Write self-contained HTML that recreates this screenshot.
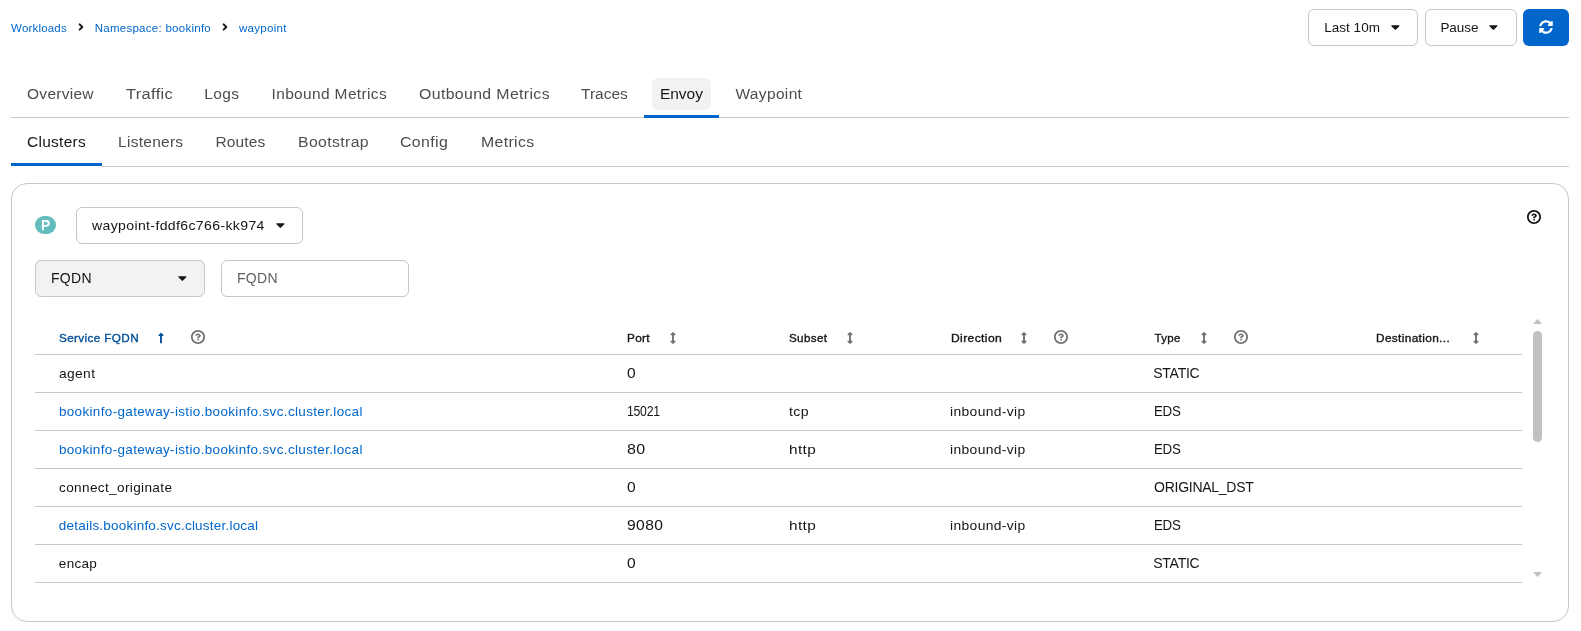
<!DOCTYPE html>
<html lang="en"><head><meta charset="utf-8"><title>Kiali - waypoint Envoy Clusters</title>
<style>
html,body{margin:0;padding:0;background:#fff}
body{width:1581px;height:631px;position:relative;overflow:hidden;font-family:"Liberation Sans", sans-serif}
.t{position:absolute;white-space:pre;line-height:1;transform-origin:0 0}
#txt{position:absolute;left:0;top:0;width:1581px;height:631px;will-change:transform}
.b{position:absolute;box-sizing:border-box}
svg{position:absolute;overflow:visible}
</style></head><body>
<!-- tab lines -->
<div class="b" style="left:11px;top:117px;width:1558px;height:1px;background:#c7c7c7"></div>
<div class="b" style="left:102px;top:166px;width:1467px;height:1px;background:#c7c7c7"></div>
<div class="b" style="left:652px;top:78px;width:59px;height:32px;background:#f2f2f2;border-radius:6px"></div>
<div class="b" style="left:644px;top:115px;width:75px;height:3px;background:#0066cc"></div>
<div class="b" style="left:11px;top:163px;width:91px;height:3px;background:#0066cc"></div>
<!-- top-right buttons -->
<div class="b" style="left:1308px;top:9px;width:110px;height:37px;border:1px solid #c7c7c7;border-radius:6px"></div>
<div class="b" style="left:1425px;top:9px;width:92px;height:37px;border:1px solid #c7c7c7;border-radius:6px"></div>
<div class="b" style="left:1523px;top:9px;width:46px;height:37px;background:#0066cc;border-radius:6px"></div>
<!-- card -->
<div class="b" style="left:11px;top:183px;width:1558px;height:439px;border:1px solid #c7c7c7;border-radius:16px"></div>
<div class="b" style="left:35px;top:216px;width:21px;height:18px;background:#63bdbd;border-radius:9px"></div>
<div class="b" style="left:76px;top:207px;width:227px;height:37px;border:1px solid #c7c7c7;border-radius:6px"></div>
<div class="b" style="left:35px;top:260px;width:170px;height:37px;border:1px solid #c7c7c7;border-radius:6px;background:#f2f2f2"></div>
<div class="b" style="left:221px;top:260px;width:188px;height:37px;border:1px solid #c7c7c7;border-radius:6px"></div>
<!-- table lines -->
<div class="b" style="left:35px;top:354px;width:1487px;height:1px;background:#c7c7c7"></div>
<div class="b" style="left:35px;top:392px;width:1487px;height:1px;background:#c7c7c7"></div>
<div class="b" style="left:35px;top:430px;width:1487px;height:1px;background:#c7c7c7"></div>
<div class="b" style="left:35px;top:468px;width:1487px;height:1px;background:#c7c7c7"></div>
<div class="b" style="left:35px;top:506px;width:1487px;height:1px;background:#c7c7c7"></div>
<div class="b" style="left:35px;top:544px;width:1487px;height:1px;background:#c7c7c7"></div>
<div class="b" style="left:35px;top:582px;width:1487px;height:1px;background:#c7c7c7"></div>
<!-- icons -->
<!-- breadcrumb chevrons 6x12 -->
<svg style="left:77.7px;top:20.9px" width="6" height="12" viewBox="0 0 256 512" fill="#151515"><path d="M224.3 273l-136 136c-9.4 9.4-24.6 9.4-33.9 0l-22.6-22.6c-9.4-9.4-9.4-24.6 0-33.9l96.4-96.4-96.4-96.4c-9.4-9.4-9.4-24.6 0-33.9L54.3 103c9.4-9.4 24.6-9.4 33.9 0l136 136c9.5 9.4 9.5 24.6.1 34z"/></svg>
<svg style="left:221.7px;top:20.9px" width="6" height="12" viewBox="0 0 256 512" fill="#151515"><path d="M224.3 273l-136 136c-9.4 9.4-24.6 9.4-33.9 0l-22.6-22.6c-9.4-9.4-9.4-24.6 0-33.9l96.4-96.4-96.4-96.4c-9.4-9.4-9.4-24.6 0-33.9L54.3 103c9.4-9.4 24.6-9.4 33.9 0l136 136c9.5 9.4 9.5 24.6.1 34z"/></svg>
<!-- carets 8.75x14 -->
<svg style="left:1391.1px;top:20px" width="8.75" height="14" viewBox="0 0 320 512" fill="#151515"><path d="M31.3 192h257.3c17.8 0 26.7 21.5 14.1 34.1L174.1 354.8c-7.8 7.8-20.5 7.8-28.3 0L17.2 226.1C4.6 213.5 13.5 192 31.3 192z"/></svg>
<svg style="left:1489.2px;top:20px" width="8.75" height="14" viewBox="0 0 320 512" fill="#151515"><path d="M31.3 192h257.3c17.8 0 26.7 21.5 14.1 34.1L174.1 354.8c-7.8 7.8-20.5 7.8-28.3 0L17.2 226.1C4.6 213.5 13.5 192 31.3 192z"/></svg>
<svg style="left:276.1px;top:218px" width="8.75" height="14" viewBox="0 0 320 512" fill="#151515"><path d="M31.3 192h257.3c17.8 0 26.7 21.5 14.1 34.1L174.1 354.8c-7.8 7.8-20.5 7.8-28.3 0L17.2 226.1C4.6 213.5 13.5 192 31.3 192z"/></svg>
<svg style="left:177.6px;top:270.8px" width="8.75" height="14" viewBox="0 0 320 512" fill="#151515"><path d="M31.3 192h257.3c17.8 0 26.7 21.5 14.1 34.1L174.1 354.8c-7.8 7.8-20.5 7.8-28.3 0L17.2 226.1C4.6 213.5 13.5 192 31.3 192z"/></svg>
<!-- sync -->
<svg style="left:1539px;top:20px" width="14" height="14" viewBox="0 0 512 512" fill="#ffffff"><path d="M370.72 133.28C339.458 104.008 298.888 87.962 255.848 88c-77.458.068-144.328 53.178-162.791 126.85-1.344 5.363-6.122 9.15-11.651 9.15H24.103c-7.498 0-13.194-6.807-11.807-14.176C33.933 94.924 134.813 8 256 8c66.448 0 126.791 26.136 171.315 68.685L463.03 40.97C478.149 25.851 504 36.559 504 57.941V192c0 13.255-10.745 24-24 24H345.941c-21.382 0-32.09-25.851-16.971-40.971l41.75-41.749zM32 296h134.059c21.382 0 32.09 25.851 16.971 40.971l-41.75 41.75c31.262 29.273 71.835 45.319 114.876 45.28 77.418-.07 144.315-53.144 162.787-126.849 1.344-5.363 6.122-9.15 11.651-9.15h57.304c7.498 0 13.194 6.807 11.807 14.176C478.067 417.076 377.187 504 256 504c-66.448 0-126.791-26.136-171.315-68.685L48.97 471.03C33.851 486.149 8 475.441 8 454.059V320c0-13.255 10.745-24 24-24z"/></svg>
<!-- sort icons 6x12 -->
<svg style="left:158px;top:332px" width="6" height="12" viewBox="0 0 256 512" fill="#004d99"><path d="M88 166.059V468c0 6.627 5.373 12 12 12h56c6.627 0 12-5.373 12-12V166.059h46.059c21.382 0 32.09-25.851 16.971-40.971l-86.059-86.059c-9.373-9.373-24.569-9.373-33.941 0l-86.059 86.059c-15.119 15.119-4.411 40.971 16.971 40.971H88z"/></svg>
<svg style="left:670px;top:332px" width="6" height="12" viewBox="0 0 256 512" fill="#707070"><path d="M214.059 377.941H168V134.059h46.059c21.382 0 32.09-25.851 16.971-40.971L144.971 7.029c-9.373-9.373-24.568-9.373-33.941 0L24.971 93.088c-15.119 15.119-4.411 40.971 16.971 40.971H88v243.882H41.941c-21.382 0-32.09 25.851-16.971 40.971l86.059 86.059c9.373 9.373 24.568 9.373 33.941 0l86.059-86.059c15.12-15.119 4.412-40.971-16.97-40.971z"/></svg>
<svg style="left:846.8px;top:332px" width="6" height="12" viewBox="0 0 256 512" fill="#707070"><path d="M214.059 377.941H168V134.059h46.059c21.382 0 32.09-25.851 16.971-40.971L144.971 7.029c-9.373-9.373-24.568-9.373-33.941 0L24.971 93.088c-15.119 15.119-4.411 40.971 16.971 40.971H88v243.882H41.941c-21.382 0-32.09 25.851-16.971 40.971l86.059 86.059c9.373 9.373 24.568 9.373 33.941 0l86.059-86.059c15.12-15.119 4.412-40.971-16.97-40.971z"/></svg>
<svg style="left:1020.8px;top:332px" width="6" height="12" viewBox="0 0 256 512" fill="#707070"><path d="M214.059 377.941H168V134.059h46.059c21.382 0 32.09-25.851 16.971-40.971L144.971 7.029c-9.373-9.373-24.568-9.373-33.941 0L24.971 93.088c-15.119 15.119-4.411 40.971 16.971 40.971H88v243.882H41.941c-21.382 0-32.09 25.851-16.971 40.971l86.059 86.059c9.373 9.373 24.568 9.373 33.941 0l86.059-86.059c15.12-15.119 4.412-40.971-16.97-40.971z"/></svg>
<svg style="left:1200.7px;top:332px" width="6" height="12" viewBox="0 0 256 512" fill="#707070"><path d="M214.059 377.941H168V134.059h46.059c21.382 0 32.09-25.851 16.971-40.971L144.971 7.029c-9.373-9.373-24.568-9.373-33.941 0L24.971 93.088c-15.119 15.119-4.411 40.971 16.971 40.971H88v243.882H41.941c-21.382 0-32.09 25.851-16.971 40.971l86.059 86.059c9.373 9.373 24.568 9.373 33.941 0l86.059-86.059c15.12-15.119 4.412-40.971-16.97-40.971z"/></svg>
<svg style="left:1473.1px;top:332px" width="6" height="12" viewBox="0 0 256 512" fill="#707070"><path d="M214.059 377.941H168V134.059h46.059c21.382 0 32.09-25.851 16.971-40.971L144.971 7.029c-9.373-9.373-24.568-9.373-33.941 0L24.971 93.088c-15.119 15.119-4.411 40.971 16.971 40.971H88v243.882H41.941c-21.382 0-32.09 25.851-16.971 40.971l86.059 86.059c9.373 9.373 24.568 9.373 33.941 0l86.059-86.059c15.12-15.119 4.412-40.971-16.97-40.971z"/></svg>
<!-- help icons 14x14 -->
<svg style="left:191px;top:330px" width="14" height="14" viewBox="0 0 1024 1024" fill="#707070"><path fill-rule="evenodd" d="M521.3,576 C627.5,576 713.7,502 713.7,413.7 C713.7,325.4 627.6,253.6 521.3,253.6 C366,253.6 334.5,337.7 329.2,407.2 C329.2,414.3 335.2,416 343.5,416 L445,416 C450.5,416 458,415.5 460.8,406.5 C460.8,362.6 582.9,357.1 582.9,413.6 C582.9,441.9 556.2,470.9 521.3,473 C486.4,475.1 447.3,479.8 447.3,521.7 L447.3,553.8 C447.3,570.8 456.1,576 472,576 C487.9,576 521.3,576 521.3,576 M575.3,751.3 L575.3,655.3 C575.3,649.3 570.7,644.7 564.7,644.7 L468.7,644.7 C462.7,644.7 458.1,649.3 458.1,655.3 L458.1,751.3 C458.1,757.3 462.7,761.9 468.7,761.9 L564.7,761.9 C570.7,761.9 575.3,757.3 575.3,751.3 M512,896 C300.2,896 128,723.9 128,512 C128,300.3 300.2,128 512,128 C723.8,128 896,300.2 896,512 C896,723.8 723.7,896 512,896 M512.1,0 C229.7,0 0,229.8 0,512 C0,794.2 229.8,1024 512.1,1024 C794.4,1024 1024,794.3 1024,512 C1024,229.7 794.4,0 512.1,0"/></svg>
<svg style="left:1054px;top:330px" width="14" height="14" viewBox="0 0 1024 1024" fill="#707070"><path fill-rule="evenodd" d="M521.3,576 C627.5,576 713.7,502 713.7,413.7 C713.7,325.4 627.6,253.6 521.3,253.6 C366,253.6 334.5,337.7 329.2,407.2 C329.2,414.3 335.2,416 343.5,416 L445,416 C450.5,416 458,415.5 460.8,406.5 C460.8,362.6 582.9,357.1 582.9,413.6 C582.9,441.9 556.2,470.9 521.3,473 C486.4,475.1 447.3,479.8 447.3,521.7 L447.3,553.8 C447.3,570.8 456.1,576 472,576 C487.9,576 521.3,576 521.3,576 M575.3,751.3 L575.3,655.3 C575.3,649.3 570.7,644.7 564.7,644.7 L468.7,644.7 C462.7,644.7 458.1,649.3 458.1,655.3 L458.1,751.3 C458.1,757.3 462.7,761.9 468.7,761.9 L564.7,761.9 C570.7,761.9 575.3,757.3 575.3,751.3 M512,896 C300.2,896 128,723.9 128,512 C128,300.3 300.2,128 512,128 C723.8,128 896,300.2 896,512 C896,723.8 723.7,896 512,896 M512.1,0 C229.7,0 0,229.8 0,512 C0,794.2 229.8,1024 512.1,1024 C794.4,1024 1024,794.3 1024,512 C1024,229.7 794.4,0 512.1,0"/></svg>
<svg style="left:1234px;top:330px" width="14" height="14" viewBox="0 0 1024 1024" fill="#707070"><path fill-rule="evenodd" d="M521.3,576 C627.5,576 713.7,502 713.7,413.7 C713.7,325.4 627.6,253.6 521.3,253.6 C366,253.6 334.5,337.7 329.2,407.2 C329.2,414.3 335.2,416 343.5,416 L445,416 C450.5,416 458,415.5 460.8,406.5 C460.8,362.6 582.9,357.1 582.9,413.6 C582.9,441.9 556.2,470.9 521.3,473 C486.4,475.1 447.3,479.8 447.3,521.7 L447.3,553.8 C447.3,570.8 456.1,576 472,576 C487.9,576 521.3,576 521.3,576 M575.3,751.3 L575.3,655.3 C575.3,649.3 570.7,644.7 564.7,644.7 L468.7,644.7 C462.7,644.7 458.1,649.3 458.1,655.3 L458.1,751.3 C458.1,757.3 462.7,761.9 468.7,761.9 L564.7,761.9 C570.7,761.9 575.3,757.3 575.3,751.3 M512,896 C300.2,896 128,723.9 128,512 C128,300.3 300.2,128 512,128 C723.8,128 896,300.2 896,512 C896,723.8 723.7,896 512,896 M512.1,0 C229.7,0 0,229.8 0,512 C0,794.2 229.8,1024 512.1,1024 C794.4,1024 1024,794.3 1024,512 C1024,229.7 794.4,0 512.1,0"/></svg>
<svg style="left:1527px;top:210px" width="14" height="14" viewBox="0 0 1024 1024" fill="#151515"><path fill-rule="evenodd" d="M521.3,576 C627.5,576 713.7,502 713.7,413.7 C713.7,325.4 627.6,253.6 521.3,253.6 C366,253.6 334.5,337.7 329.2,407.2 C329.2,414.3 335.2,416 343.5,416 L445,416 C450.5,416 458,415.5 460.8,406.5 C460.8,362.6 582.9,357.1 582.9,413.6 C582.9,441.9 556.2,470.9 521.3,473 C486.4,475.1 447.3,479.8 447.3,521.7 L447.3,553.8 C447.3,570.8 456.1,576 472,576 C487.9,576 521.3,576 521.3,576 M575.3,751.3 L575.3,655.3 C575.3,649.3 570.7,644.7 564.7,644.7 L468.7,644.7 C462.7,644.7 458.1,649.3 458.1,655.3 L458.1,751.3 C458.1,757.3 462.7,761.9 468.7,761.9 L564.7,761.9 C570.7,761.9 575.3,757.3 575.3,751.3 M512,896 C300.2,896 128,723.9 128,512 C128,300.3 300.2,128 512,128 C723.8,128 896,300.2 896,512 C896,723.8 723.7,896 512,896 M512.1,0 C229.7,0 0,229.8 0,512 C0,794.2 229.8,1024 512.1,1024 C794.4,1024 1024,794.3 1024,512 C1024,229.7 794.4,0 512.1,0"/></svg>
<!-- scrollbar -->
<div class="b" style="left:1533px;top:331px;width:9px;height:110.5px;background:#c1c1c1;border-radius:4.5px"></div>
<svg style="left:1533px;top:319px" width="9" height="5" viewBox="0 0 9 5" fill="#c1c1c1"><path d="M0 5L4.5 0L9 5z"/></svg>
<svg style="left:1533px;top:572px" width="9" height="5" viewBox="0 0 9 5" fill="#c1c1c1"><path d="M0 0L4.5 5L9 0z"/></svg>

<div id="txt">
<span class="t" style="left:11.12px;top:23px;font-size:11.5px;color:#0066cc;letter-spacing:0.178px">Workloads</span>
<span class="t" style="left:94.70px;top:23px;font-size:11.5px;color:#0066cc;letter-spacing:0.268px">Namespace: bookinfo</span>
<span class="t" style="left:238.93px;top:23px;font-size:11.5px;color:#0066cc;letter-spacing:0.294px">waypoint</span>
<span class="t" style="left:27.05px;top:86px;font-size:15.5px;color:#4d4d4d;letter-spacing:0.263px">Overview</span>
<span class="t" style="left:126.08px;top:86px;font-size:15.5px;color:#4d4d4d;letter-spacing:0.350px;transform:scaleX(1.0546)">Traffic</span>
<span class="t" style="left:204.22px;top:86px;font-size:15.5px;color:#4d4d4d;letter-spacing:0.350px">Logs</span>
<span class="t" style="left:271.53px;top:86px;font-size:15.5px;color:#4d4d4d;letter-spacing:0.346px">Inbound Metrics</span>
<span class="t" style="left:418.64px;top:86px;font-size:15.5px;color:#4d4d4d;letter-spacing:0.350px;transform:scaleX(1.0234)">Outbound Metrics</span>
<span class="t" style="left:581.08px;top:86px;font-size:15.5px;color:#4d4d4d;letter-spacing:-0.011px">Traces</span>
<span class="t" style="left:735.45px;top:86px;font-size:15.5px;color:#4d4d4d;letter-spacing:0.350px">Waypoint</span>
<span class="t" style="left:659.92px;top:86px;font-size:15.5px;color:#151515;letter-spacing:-0.026px">Envoy</span>
<span class="t" style="left:27.10px;top:134px;font-size:15.5px;color:#151515;letter-spacing:0.247px">Clusters</span>
<span class="t" style="left:118.12px;top:134px;font-size:15.5px;color:#4d4d4d;letter-spacing:0.260px">Listeners</span>
<span class="t" style="left:215.52px;top:134px;font-size:15.5px;color:#4d4d4d;letter-spacing:0.135px">Routes</span>
<span class="t" style="left:298.30px;top:134px;font-size:15.5px;color:#4d4d4d;letter-spacing:0.350px;transform:scaleX(1.0211)">Bootstrap</span>
<span class="t" style="left:400.47px;top:134px;font-size:15.5px;color:#4d4d4d;letter-spacing:0.350px;transform:scaleX(1.0257)">Config</span>
<span class="t" style="left:480.60px;top:134px;font-size:15.5px;color:#4d4d4d;letter-spacing:0.350px;transform:scaleX(1.0212)">Metrics</span>
<span class="t" style="left:1324.29px;top:21px;font-size:13.5px;color:#151515;letter-spacing:0.014px">Last 10m</span>
<span class="t" style="left:1440.39px;top:21px;font-size:13.5px;color:#151515;letter-spacing:-0.007px">Pause</span>
<span class="t" style="left:40.81px;top:218px;font-size:14px;color:#ffffff;transform:scaleX(0.9875);font-weight:700">P</span>
<span class="t" style="left:91.96px;top:219px;font-size:13.5px;color:#151515;letter-spacing:0.350px;transform:scaleX(1.0406)">waypoint-fddf6c766-kk974</span>
<span class="t" style="left:50.97px;top:271px;font-size:14px;color:#151515;letter-spacing:0.330px">FQDN</span>
<span class="t" style="left:236.97px;top:271px;font-size:14px;color:#5f5f5f;letter-spacing:0.297px">FQDN</span>
<span class="t" style="left:58.89px;top:333px;font-size:11.5px;color:#004d99;letter-spacing:0.350px;transform:scaleX(1.0216);-webkit-text-stroke:0.35px currentColor">Service FQDN</span>
<span class="t" style="left:627.18px;top:333px;font-size:11.5px;color:#151515;letter-spacing:0.350px;transform:scaleX(1.0214);-webkit-text-stroke:0.35px currentColor">Port</span>
<span class="t" style="left:789.29px;top:333px;font-size:11.5px;color:#151515;letter-spacing:0.350px;transform:scaleX(1.0121);-webkit-text-stroke:0.35px currentColor">Subset</span>
<span class="t" style="left:951.17px;top:333px;font-size:11.5px;color:#151515;letter-spacing:0.350px;transform:scaleX(1.0529);-webkit-text-stroke:0.35px currentColor">Direction</span>
<span class="t" style="left:1154.48px;top:333px;font-size:11.5px;color:#151515;letter-spacing:0.350px;-webkit-text-stroke:0.35px currentColor">Type</span>
<span class="t" style="left:1376.18px;top:333px;font-size:11.5px;color:#151515;letter-spacing:0.350px;transform:scaleX(1.0279);-webkit-text-stroke:0.35px currentColor">Destination...</span>
<span class="t" style="left:58.80px;top:367px;font-size:13.5px;color:#151515;letter-spacing:0.350px;transform:scaleX(1.0233)">agent</span>
<span class="t" style="left:626.92px;top:366px;font-size:14px;color:#151515;transform:scaleX(1.1139)">0</span>
<span class="t" style="left:1153.27px;top:366px;font-size:14px;color:#151515;letter-spacing:-0.261px">STATIC</span>
<span class="t" style="left:58.90px;top:405px;font-size:13.5px;color:#0066cc;letter-spacing:0.337px">bookinfo-gateway-istio.bookinfo.svc.cluster.local</span>
<span class="t" style="left:626.63px;top:404px;font-size:14px;color:#151515;letter-spacing:-0.300px;transform:scaleX(0.8748)">15021</span>
<span class="t" style="left:789.35px;top:405px;font-size:13.5px;color:#151515;letter-spacing:0.350px;transform:scaleX(1.0454)">tcp</span>
<span class="t" style="left:950.27px;top:405px;font-size:13.5px;color:#151515;letter-spacing:0.350px;transform:scaleX(1.0265)">inbound-vip</span>
<span class="t" style="left:1154.32px;top:404px;font-size:14px;color:#151515;letter-spacing:-0.300px;transform:scaleX(0.9499)">EDS</span>
<span class="t" style="left:58.90px;top:443px;font-size:13.5px;color:#0066cc;letter-spacing:0.337px">bookinfo-gateway-istio.bookinfo.svc.cluster.local</span>
<span class="t" style="left:626.57px;top:442px;font-size:14px;color:#151515;letter-spacing:0.350px;transform:scaleX(1.1420)">80</span>
<span class="t" style="left:788.56px;top:443px;font-size:13.5px;color:#151515;letter-spacing:0.350px;transform:scaleX(1.1383)">http</span>
<span class="t" style="left:950.27px;top:443px;font-size:13.5px;color:#151515;letter-spacing:0.350px;transform:scaleX(1.0265)">inbound-vip</span>
<span class="t" style="left:1154.32px;top:442px;font-size:14px;color:#151515;letter-spacing:-0.300px;transform:scaleX(0.9499)">EDS</span>
<span class="t" style="left:58.83px;top:481px;font-size:13.5px;color:#151515;letter-spacing:0.350px;transform:scaleX(1.0069)">connect_originate</span>
<span class="t" style="left:626.92px;top:480px;font-size:14px;color:#151515;transform:scaleX(1.1139)">0</span>
<span class="t" style="left:1154.09px;top:480px;font-size:14px;color:#151515;letter-spacing:-0.268px">ORIGINAL_DST</span>
<span class="t" style="left:58.83px;top:519px;font-size:13.5px;color:#0066cc;letter-spacing:0.216px">details.bookinfo.svc.cluster.local</span>
<span class="t" style="left:626.53px;top:518px;font-size:14px;color:#151515;letter-spacing:0.350px;transform:scaleX(1.1157)">9080</span>
<span class="t" style="left:788.56px;top:519px;font-size:13.5px;color:#151515;letter-spacing:0.350px;transform:scaleX(1.1383)">http</span>
<span class="t" style="left:950.27px;top:519px;font-size:13.5px;color:#151515;letter-spacing:0.350px;transform:scaleX(1.0265)">inbound-vip</span>
<span class="t" style="left:1154.32px;top:518px;font-size:14px;color:#151515;letter-spacing:-0.300px;transform:scaleX(0.9499)">EDS</span>
<span class="t" style="left:58.83px;top:557px;font-size:13.5px;color:#151515;letter-spacing:0.296px">encap</span>
<span class="t" style="left:626.92px;top:556px;font-size:14px;color:#151515;transform:scaleX(1.1139)">0</span>
<span class="t" style="left:1153.27px;top:556px;font-size:14px;color:#151515;letter-spacing:-0.261px">STATIC</span>
</div>
</body></html>
